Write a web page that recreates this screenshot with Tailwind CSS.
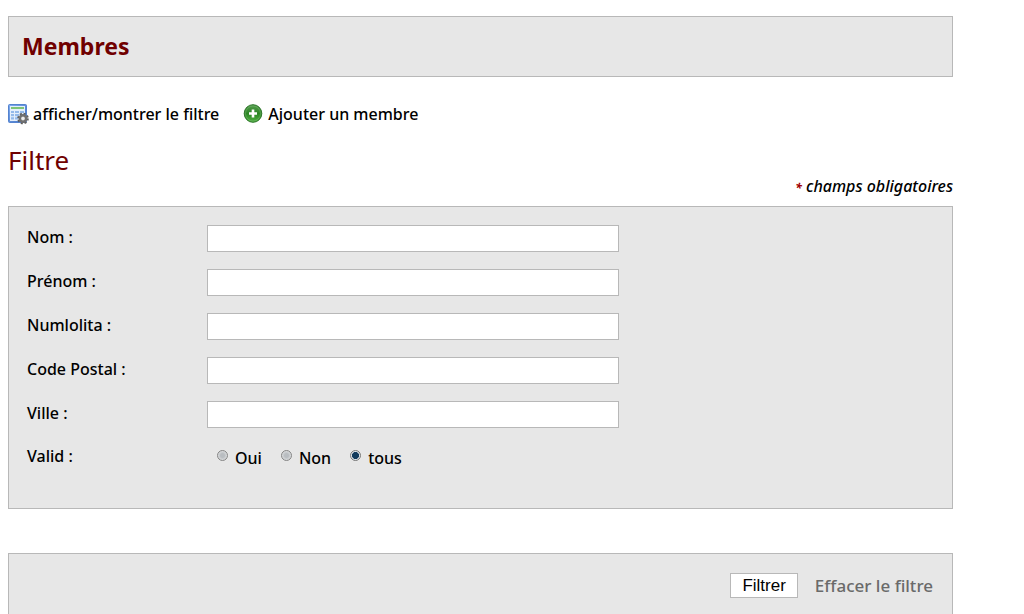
<!DOCTYPE html>
<html lang="fr">
<head>
<meta charset="utf-8">
<meta name="viewport" content="width=device-width, initial-scale=1">
<title>Membres</title>
<script src="https://cdn.jsdelivr.net/npm/@tailwindcss/browser@4"></script>
</head>
<body class="bg-white font-['Noto_Sans','Open_Sans',sans-serif] text-[16px] leading-6 font-medium text-black overflow-x-hidden">
<div class="ml-2 mr-[71px] pt-4">
  <header class="border border-[#b8b8b8] bg-[#e7e7e7] px-[13px] py-[13px]">
    <h1 class="text-[23px] leading-[33px] font-bold text-[#700000]">Membres</h1>
  </header>

  <nav class="mt-[25px] flex items-center gap-6">
    <a href="#filtre" class="flex items-center gap-1">
      <svg class="size-[21px]" viewBox="0 0 21 21" aria-hidden="true">
        <defs><linearGradient id="sheet" x1="0" y1="0" x2="1" y2="1"><stop offset="0" stop-color="#81aef0"/><stop offset="1" stop-color="#3f70c4"/></linearGradient></defs>
        <rect x=".5" y=".5" width="18" height="18" rx="1" fill="url(#sheet)" stroke="#5583cf"/>
        <rect x="2" y="2" width="15" height="15" fill="#e4effb"/>
        <path d="M3 4h13" stroke="#64b957" stroke-width="1.600"/>
        <path d="M3 8h3m1 0h4m1 0h4M3 11.200h3m1 0h4m1 0h4M3 14.400h3m1 0h3" stroke="#94baea" stroke-width="2.200"/>
        <circle cx="15" cy="14.500" r="4.800" fill="none" stroke="#5c5c5c" stroke-width="2" stroke-dasharray="2 1.770"/>
        <circle cx="15" cy="14.500" r="3.200" fill="#d5d5d5" stroke="#707070" stroke-width="2.600"/>
        <circle cx="15" cy="14.500" r="1.400" fill="#eee"/>
      </svg>
      <span>afficher/montrer le filtre</span>
    </a>
    <a href="#ajouter" class="flex items-center gap-[5px]">
      <svg class="size-5" viewBox="0 0 20 20" aria-hidden="true">
        <defs><linearGradient id="add" x1="0" y1="0" x2="0" y2="1"><stop offset="0" stop-color="#559c4e"/><stop offset=".5" stop-color="#2c8524"/><stop offset="1" stop-color="#4fb13f"/></linearGradient></defs>
        <circle cx="10" cy="9.500" r="8.800" fill="url(#add)" stroke="#2c7428"/>
        <circle cx="10" cy="9.500" r="7.500" fill="none" stroke="#79b972" stroke-opacity=".5"/>
        <path d="M10 5.500v8M6 9.500h8" stroke="#fff" stroke-width="2.600"/>
      </svg>
      <span>Ajouter un membre</span>
    </a>
  </nav>

  <main id="filtre">
    <h2 class="mt-[17px] text-[26px] leading-[34px] font-normal text-[#700000]">Filtre</h2>
    <p class="-mt-[3px] text-right italic"><span class="text-[12px] font-bold text-[#a00000]">*</span> champs obligatoires</p>

    <form>
      <div class="mt-[6px] flex flex-col gap-[17px] border border-[#b8b8b8] bg-[#e7e7e7] pt-[18px] pb-[38px] px-[18px]">
        <div class="flex items-start"><label for="nom" class="w-[180px]">Nom :</label><input id="nom" type="text" class="h-[27px] w-[412px] border border-[#b8b8b8] bg-white px-1"></div>
        <div class="flex items-start"><label for="prenom" class="w-[180px]">Prénom :</label><input id="prenom" type="text" class="h-[27px] w-[412px] border border-[#b8b8b8] bg-white px-1"></div>
        <div class="flex items-start"><label for="numlolita" class="w-[180px]">Numlolita :</label><input id="numlolita" type="text" class="h-[27px] w-[412px] border border-[#b8b8b8] bg-white px-1"></div>
        <div class="flex items-start"><label for="cp" class="w-[180px]">Code Postal :</label><input id="cp" type="text" class="h-[27px] w-[412px] border border-[#b8b8b8] bg-white px-1"></div>
        <div class="flex items-start"><label for="ville" class="w-[180px]">Ville :</label><input id="ville" type="text" class="h-[27px] w-[412px] border border-[#b8b8b8] bg-white px-1"></div>
        <div role="radiogroup" aria-labelledby="valid" class="-mt-px flex items-start">
          <span id="valid" class="w-[180px]">Valid :</span>
          <div class="flex gap-[19px] pl-[10px] pt-[2px]">
            <label class="flex items-start gap-[7px]"><input type="radio" name="valid" value="oui" class="mt-1 size-[11px] appearance-none rounded-full border border-[#858585] bg-radial from-[#b9bdc1] from-30% to-[#f2f2f2] checked:border-[#777] checked:from-[#123a5c] checked:from-50% checked:to-[#e0e5e9] checked:to-60%"><span>Oui</span></label>
            <label class="flex items-start gap-[7px]"><input type="radio" name="valid" value="non" class="mt-1 size-[11px] appearance-none rounded-full border border-[#858585] bg-radial from-[#b9bdc1] from-30% to-[#f2f2f2] checked:border-[#777] checked:from-[#123a5c] checked:from-50% checked:to-[#e0e5e9] checked:to-60%"><span>Non</span></label>
            <label class="flex items-start gap-[7px]"><input type="radio" name="valid" value="tous" checked class="mt-1 size-[11px] appearance-none rounded-full border border-[#858585] bg-radial from-[#b9bdc1] from-30% to-[#f2f2f2] checked:border-[#777] checked:from-[#123a5c] checked:from-50% checked:to-[#e0e5e9] checked:to-60%"><span>tous</span></label>
          </div>
        </div>
      </div>

      <div class="mt-11 flex items-center justify-end gap-[17px] border border-[#b8b8b8] bg-[#e7e7e7] px-[19px] py-[19px]">
        <button type="submit" class="h-[25px] border border-[#b8b8b8] bg-white px-[11px] font-['Liberation_Sans',Arial,sans-serif] text-[17px] leading-[23px] font-normal">Filtrer</button>
        <a href="#effacer" class="text-[17px] text-[#6a6a6a]">Effacer le filtre</a>
      </div>
    </form>
  </main>
</div>
</body>
</html>
